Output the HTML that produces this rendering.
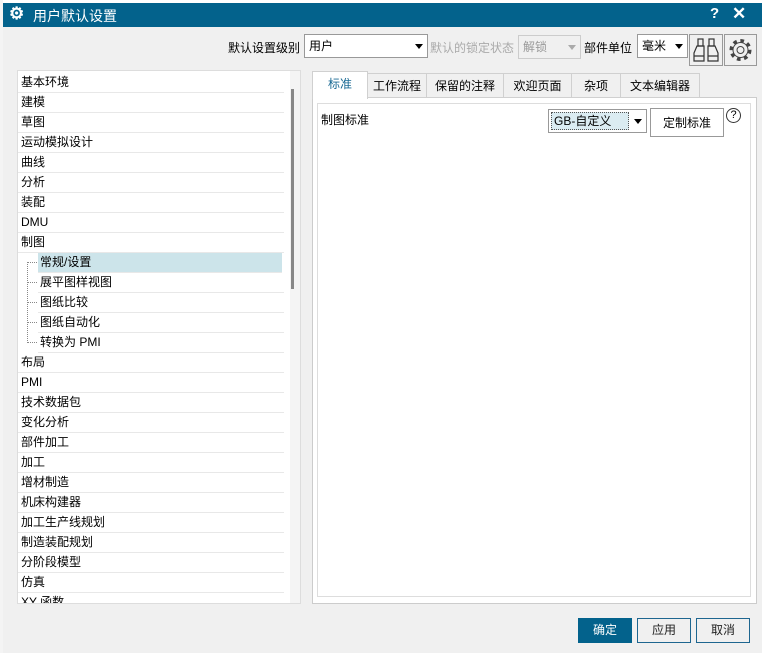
<!DOCTYPE html><html><head><meta charset="utf-8"><style>
*{box-sizing:border-box;margin:0;padding:0}
body{width:769px;height:653px;background:#fff;font-family:"Liberation Sans","Noto Sans CJK SC",sans-serif;font-size:12px;color:#000;position:relative;overflow:hidden}
.a{position:absolute}
.dlg{left:3px;top:3px;width:759px;height:650px;background:#f0f0f0}
.title{left:3px;top:3px;width:759px;height:24px;background:#03628c;color:#fff;font-size:14px}
.row{position:absolute;left:0;width:266px;height:20px;line-height:19px;border-bottom:1px solid #e8e8e8;padding-left:3px}
.tab{position:absolute;top:73px;height:25px;border:1px solid #d0d0d0;background:#f0f0f0;text-align:center;line-height:24px}
.btn{position:absolute;top:618px;width:54px;height:25px;border:1px solid #1e6690;text-align:center;line-height:23px;background:#f0f0f0;color:#222}
.sel{position:absolute;background:#fff;border:1px solid #999;height:24px;line-height:22px;padding-left:4px}
.arr{position:absolute;right:4px;top:9px;width:0;height:0;border-left:4px solid transparent;border-right:4px solid transparent;border-top:5px solid #000}
</style></head><body>
<div class="a" style="left:0;top:0;width:3px;height:653px;background:#f4f4f4"></div>
<div class="a dlg"></div>
<div class="a title"><span class="a" style="left:6px;top:1px;font-size:17px;font-weight:bold">⚙</span><span class="a" style="left:30px;top:3px">用户默认设置</span><span class="a" style="left:707px;top:2px;font-weight:bold;font-size:15px">?</span><span class="a" style="left:729px;top:1px;font-size:17px;font-weight:bold">✕</span></div>

<span class="a" style="left:228px;top:39px">默认设置级别</span>
<div class="sel" style="left:304px;top:34px;width:124px">用户<div class="arr"></div></div>
<span class="a" style="left:430px;top:39px;color:#aaa">默认的锁定状态</span>
<div class="sel" style="left:518px;top:35px;width:63px;background:#f0f0f0;border-color:#ccc;color:#999">解锁<div class="arr" style="border-top-color:#aaa"></div></div>
<span class="a" style="left:584px;top:39px">部件单位</span>
<div class="sel" style="left:637px;top:34px;width:51px">毫米<div class="arr"></div></div>
<div class="a" style="left:689px;top:34px;width:34px;height:32px;border:1px solid #999;background:#f0f0f0"><svg width="32" height="30" viewBox="0 0 32 30" fill="none" stroke="#333" stroke-width="1.2"><rect x="8" y="4" width="5" height="7"/><rect x="19" y="4" width="5" height="7"/><path d="M7 11h7v15H4V18zM18 11h7l3 7v8H18z M4 21h10M18 21h10"/></svg></div>
<div class="a" style="left:724px;top:34px;width:33px;height:32px;border:1px solid #999;background:#f0f0f0"><svg width="31" height="30" viewBox="0 0 31 30"><circle cx="15.5" cy="15" r="9" fill="none" stroke="#444" stroke-width="4" stroke-dasharray="3.5 3.5"/><circle cx="15.5" cy="15" r="7.5" fill="#f0f0f0" stroke="#444"/><circle cx="15.5" cy="15" r="3.5" fill="none" stroke="#444"/></svg></div>

<div class="a" style="left:17px;top:70px;width:284px;height:534px;background:#fff;border:1px solid #ddd;overflow:hidden">
<div class="a" style="left:272px;top:0;width:11px;height:534px;background:#f4f4f4"></div>
<div class="a" style="left:273px;top:18px;width:3px;height:200px;background:#888"></div>
<div style="position:absolute;left:0;top:2px">
<div class="row" style="top:0">基本环境</div><div class="row" style="top:20px">建模</div><div class="row" style="top:40px">草图</div><div class="row" style="top:60px">运动模拟设计</div><div class="row" style="top:80px">曲线</div><div class="row" style="top:100px">分析</div><div class="row" style="top:120px">装配</div><div class="row" style="top:140px">DMU</div><div class="row" style="top:160px">制图</div>
<div class="row" style="top:180px;left:20px;width:244px;background:#cce4ea;padding-left:2px">常规/设置</div>
<div class="row" style="top:200px;left:20px;width:246px;padding-left:2px">展平图样视图</div>
<div class="row" style="top:220px;left:20px;width:246px;padding-left:2px">图纸比较</div>
<div class="row" style="top:240px;left:20px;width:246px;padding-left:2px">图纸自动化</div>
<div class="row" style="top:260px;left:20px;width:246px;padding-left:2px">转换为 PMI</div>
<div class="a" style="left:9px;top:189px;width:1px;height:81px;border-left:1px dotted #888"></div>
<div class="a" style="left:9px;top:189px;width:10px;border-top:1px dotted #888"></div><div class="a" style="left:9px;top:209px;width:10px;border-top:1px dotted #888"></div><div class="a" style="left:9px;top:229px;width:10px;border-top:1px dotted #888"></div><div class="a" style="left:9px;top:249px;width:10px;border-top:1px dotted #888"></div><div class="a" style="left:9px;top:269px;width:10px;border-top:1px dotted #888"></div>
<div class="row" style="top:280px">布局</div><div class="row" style="top:300px">PMI</div><div class="row" style="top:320px">技术数据包</div><div class="row" style="top:340px">变化分析</div><div class="row" style="top:360px">部件加工</div><div class="row" style="top:380px">加工</div><div class="row" style="top:400px">增材制造</div><div class="row" style="top:420px">机床构建器</div><div class="row" style="top:440px">加工生产线规划</div><div class="row" style="top:460px">制造装配规划</div><div class="row" style="top:480px">分阶段模型</div><div class="row" style="top:500px">仿真</div><div class="row" style="top:520px">XY 函数</div>
</div></div>

<div class="a" style="left:312px;top:97px;width:445px;height:507px;background:#fff;border:1px solid #ccc"></div>
<div class="a" style="left:317px;top:103px;width:434px;height:494px;border:1px solid #ddd"></div>
<div class="tab" style="left:367px;width:60px">工作流程</div>
<div class="tab" style="left:426px;width:78px">保留的注释</div>
<div class="tab" style="left:503px;width:69px">欢迎页面</div>
<div class="tab" style="left:571px;width:50px">杂项</div>
<div class="tab" style="left:620px;width:80px">文本编辑器</div>
<div class="tab" style="left:312px;top:71px;width:56px;height:28px;background:#fff;border-bottom:none;color:#1a6a94">标准</div>
<span class="a" style="left:321px;top:111px">制图标准</span>
<div class="a" style="left:548px;top:109px;width:99px;height:24px;border:1px solid #999;background:#fff"><div class="a" style="left:2px;top:2px;width:78px;height:18px;background:#dbecf2;border:1px dotted #555;line-height:16px;padding-left:2px">GB-自定义</div><div class="arr" style="top:9px"></div></div>
<div class="a" style="left:650px;top:108px;width:74px;height:29px;border:1px solid #999;background:#fff;text-align:center;line-height:28px">定制标准</div>
<div class="a" style="left:726px;top:108px;width:15px;height:15px;border:1px solid #333;border-radius:50%;text-align:center;line-height:13px;font-size:11px">?</div>

<div class="btn" style="left:578px;background:#03628c;color:#fff;border-color:#03628c">确定</div>
<div class="btn" style="left:637px">应用</div>
<div class="btn" style="left:696px">取消</div>
</body></html>
